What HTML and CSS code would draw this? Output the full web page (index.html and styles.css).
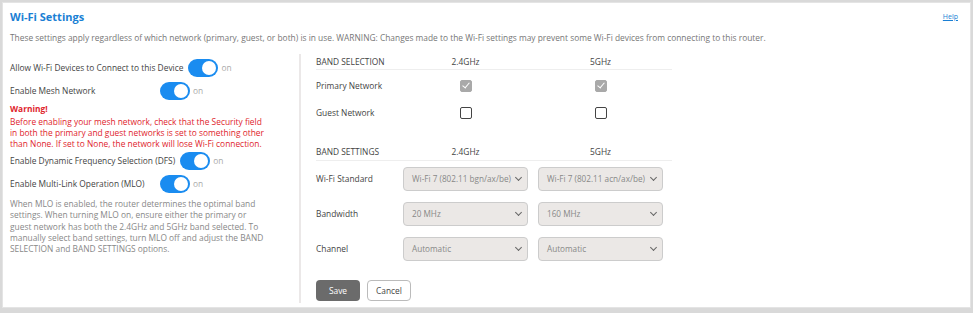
FILE: index.html
```html
<!DOCTYPE html>
<html lang="en">
<head>
  <meta charset="UTF-8" />
  <title>Wi-Fi Settings</title>
  <link rel="stylesheet" href="styles.css">
</head>
<body>

<div class="card">
  <div class="card-head">
    <h1>Wi-Fi Settings</h1>
    <a href="#" class="help">Help</a>
  </div>
  <p class="intro">These settings apply regardless of which network (primary, guest, or both) is in use. WARNING: Changes made to the Wi-Fi settings may prevent some Wi-Fi devices from connecting to this router.</p>

  <div class="content">
    <!-- left side: switches -->
    <div class="left">
      <div class="switch-row">
        <span class="switch-label">Allow Wi-Fi Devices to Connect to this Device</span>
        <span class="toggle on"></span><span class="state">on</span>
      </div>
      <div class="switch-row">
        <span class="switch-label">Enable Mesh Network</span>
        <span class="toggle on"></span><span class="state">on</span>
      </div>
      <div class="warning">
        <strong>Warning!</strong>
        Before enabling your mesh network, check that the Security field in both the primary and guest networks is set to something other than None. If set to None, the network will lose Wi-Fi connection.
      </div>
      <div class="switch-row">
        <span class="switch-label">Enable Dynamic Frequency Selection (DFS)</span>
        <span class="toggle on"></span><span class="state">on</span>
      </div>
      <div class="switch-row">
        <span class="switch-label">Enable Multi-Link Operation (MLO)</span>
        <span class="toggle on"></span><span class="state">on</span>
      </div>
      <p class="note">When MLO is enabled, the router determines the optimal band settings. When turning MLO on, ensure either the primary or guest network has both the 2.4GHz and 5GHz band selected. To manually select band settings, turn MLO off and adjust the BAND SELECTION and BAND SETTINGS options.</p>
    </div>

    <!-- right side: bands -->
    <div class="right">
      <div class="grid head">
        <span>BAND SELECTION</span>
        <span class="mid">2.4GHz</span>
        <span class="mid">5GHz</span>
      </div>
      <div class="grid check-row first">
        <span>Primary Network</span>
        <span class="mid"><span class="box checked"></span></span>
        <span class="mid"><span class="box checked"></span></span>
      </div>
      <div class="grid check-row">
        <span>Guest Network</span>
        <span class="mid"><span class="box"></span></span>
        <span class="mid"><span class="box"></span></span>
      </div>

      <div class="grid head second">
        <span>BAND SETTINGS</span>
        <span class="mid">2.4GHz</span>
        <span class="mid">5GHz</span>
      </div>
      <div class="grid select-row">
        <span>Wi-Fi Standard</span>
        <div class="select">Wi-Fi 7 (802.11 bgn/ax/be)</div>
        <div class="select">Wi-Fi 7 (802.11 acn/ax/be)</div>
      </div>
      <div class="grid select-row">
        <span>Bandwidth</span>
        <div class="select">20 MHz</div>
        <div class="select">160 MHz</div>
      </div>
      <div class="grid select-row">
        <span>Channel</span>
        <div class="select">Automatic</div>
        <div class="select">Automatic</div>
      </div>

      <div class="buttons">
        <button class="btn-save">Save</button>
        <button class="btn-cancel">Cancel</button>
      </div>
    </div>
  </div>
</div>

</body>
</html>
```

FILE: styles.css
```css
body {
  margin: 0;
  padding: 2px 2px 3px 2px;
  background: #d9d9d9;
  font-family: 'Open Sans', 'Liberation Sans', sans-serif;
  font-size: 8.4px;
  color: #444;
}
.card {
  background: white;
  border: 1px solid #e4e4e4;
  height: 306px;
  box-sizing: border-box;
  padding: 0 12px 0 7px;
}
.card-head {
  display: flex;
  justify-content: space-between;
  align-items: center;
  height: 26px;
}
.card-head h1 {
  margin: 0;
  font-size: 11px;
  font-weight: bold;
  color: #1a7fd4;
}
.help {
  font-size: 7px;
  color: #1a7fd4;
  text-decoration: underline;
}
.intro {
  margin: 3px 0 0 0;
  line-height: 11px;
  color: #777;
}
.content {
  display: flex;
  margin-top: 11px;
}
.left {
  width: 258px;
  padding-top: 2px;
  padding-right: 31px;
  border-right: 2px solid #ebe8e8;
  height: 247px;
  box-sizing: content-box;
}
.switch-row {
  display: flex;
  align-items: center;
  height: 23px;
}
.switch-label {
  min-width: 145px;
  margin-right: 5px;
  white-space: nowrap;
}
.toggle {
  width: 30px;
  height: 18px;
  border-radius: 9px;
  background: #1a8cf0;
  position: relative;
  flex: none;
}
.toggle::after {
  content: '';
  position: absolute;
  top: 2px;
  right: 2px;
  width: 14px;
  height: 14px;
  border-radius: 50%;
  background: white;
}
.state {
  color: #aaa;
  margin-left: 3px;
}
.warning {
  color: #e0242c;
  line-height: 11px;
  margin-top: 1px;
}
.warning strong {
  display: block;
  margin-bottom: 2px;
}
.note {
  margin: 3px 0 0 0;
  color: #888;
  line-height: 11.3px;
}
.right {
  padding: 2px 0 0 15px;
  width: 356px;
}
.grid {
  display: grid;
  grid-template-columns: 77px 125px 125px;
  column-gap: 10px;
  align-items: center;
}
.mid {
  text-align: center;
  display: flex;
  justify-content: center;
}
.head {
  height: 13px;
  line-height: 11px;
  border-bottom: 1px solid #eee;
  align-items: start;
}
.head.second {
  margin-top: 17px;
  height: 17px;
  align-items: center;
}
.check-row {
  height: 27px;
}
.check-row.first {
  margin-top: 2px;
}
.box {
  width: 10px;
  height: 10px;
  border: 1px solid #444;
  border-radius: 2px;
  background: white;
  position: relative;
}
.box.checked {
  background: #a9a9a9;
  border-color: #a9a9a9;
}
.box.checked::after {
  content: '';
  position: absolute;
  left: 3px;
  top: 0px;
  width: 3px;
  height: 6px;
  border: solid white;
  border-width: 0 1.5px 1.5px 0;
  transform: rotate(40deg);
}
.select-row {
  height: 35px;
}
.select {
  height: 24px;
  box-sizing: border-box;
  border: 1px solid #ccc;
  border-radius: 4px;
  background: #ebe8e6;
  color: #888;
  font-size: 8.2px;
  padding: 0 6px 0 8px;
  display: flex;
  align-items: center;
  justify-content: space-between;
  gap: 3px;
  white-space: nowrap;
}
.select::after {
  content: '';
  flex: none;
  width: 4px;
  height: 4px;
  border: solid #666;
  border-width: 0 1.3px 1.3px 0;
  transform: rotate(45deg);
  margin-top: -3px;
}
.buttons {
  display: flex;
  gap: 7px;
  margin-top: 14px;
}
.buttons button {
  font-family: inherit;
  font-size: 8.4px;
  width: 44px;
  height: 21px;
  border-radius: 4px;
  cursor: pointer;
}
.btn-save {
  background: #6b6b6b;
  color: white;
  border: none;
}
.btn-cancel {
  background: white;
  color: #444;
  border: 1px solid #bbb;
}
```
